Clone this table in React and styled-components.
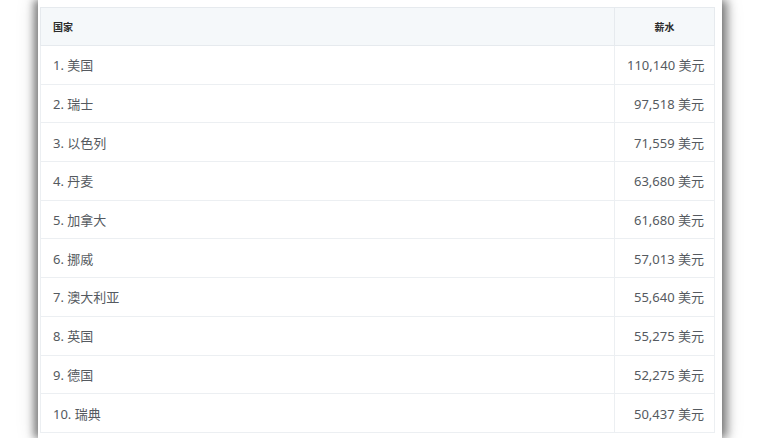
import React from 'react'
import styled, { createGlobalStyle } from 'styled-components';

const GlobalStyle = createGlobalStyle`
    html, body {
        margin: 0;
        padding: 0;
        background: #ffffff;
        overflow: hidden;
    }
    body {
        font-family: "Noto Sans", "Noto Sans CJK SC", sans-serif;
    }
`;

const rows = [
    ['1. 美国', '110,140 美元'],
    ['2. 瑞士', '97,518 美元'],
    ['3. 以色列', '71,559 美元'],
    ['4. 丹麦', '63,680 美元'],
    ['5. 加拿大', '61,680 美元'],
    ['6. 挪威', '57,013 美元'],
    ['7. 澳大利亚', '55,640 美元'],
    ['8. 英国', '55,275 美元'],
    ['9. 德国', '52,275 美元'],
    ['10. 瑞典', '50,437 美元'],
];

const App = () => {
    return (
        <>
            <GlobalStyle />
            <Stage>
                <Paper>
                    <SalaryTable>
                        <colgroup>
                            <col style={{ width: 574 }} />
                            <col style={{ width: 100 }} />
                        </colgroup>
                        <thead>
                            <tr>
                                <HeadCell>国家</HeadCell>
                                <HeadCell $center>薪水</HeadCell>
                            </tr>
                        </thead>
                        <tbody>
                            {rows.map(([country, salary]) => (
                                <tr key={country}>
                                    <Cell>{country}</Cell>
                                    <Cell $right>{salary}</Cell>
                                </tr>
                            ))}
                        </tbody>
                    </SalaryTable>
                </Paper>
            </Stage>
        </>
    )
}

export default App;

const Stage = styled.div`
    width: 760px;
    height: 438px;
    display: flex;
    justify-content: center;
    background: #ffffff;
`;

const Paper = styled.div`
    width: 684px;
    height: 438px;
    background: #ffffff;
    box-shadow: -5px 0 7px rgba(0, 0, 0, 0.35), 5px 0 9px rgba(0, 0, 0, 0.45), 0 0 20px rgba(0, 0, 0, 0.22);
    padding: 7px 8px 0 2px;
    box-sizing: border-box;
`;

const SalaryTable = styled.table`
    width: 674px;
    border-collapse: collapse;
    table-layout: fixed;
    border: 1px solid #e6eaee;
`;

const HeadCell = styled.th`
    box-sizing: border-box;
    height: 38px;
    padding: 0 12px;
    background: #f5f8fa;
    border: 1px solid #e6eaee;
    font-size: 10px;
    font-weight: 700;
    color: #2b2b2b;
    text-align: ${p => (p.$center ? 'center' : 'left')};
`;

const Cell = styled.td`
    box-sizing: border-box;
    height: 38.7px;
    padding: 0 10px 0 12px;
    border: 1px solid #eceff2;
    font-size: 13px;
    color: #555a60;
    white-space: nowrap;
    text-align: ${p => (p.$right ? 'right' : 'left')};
`;
